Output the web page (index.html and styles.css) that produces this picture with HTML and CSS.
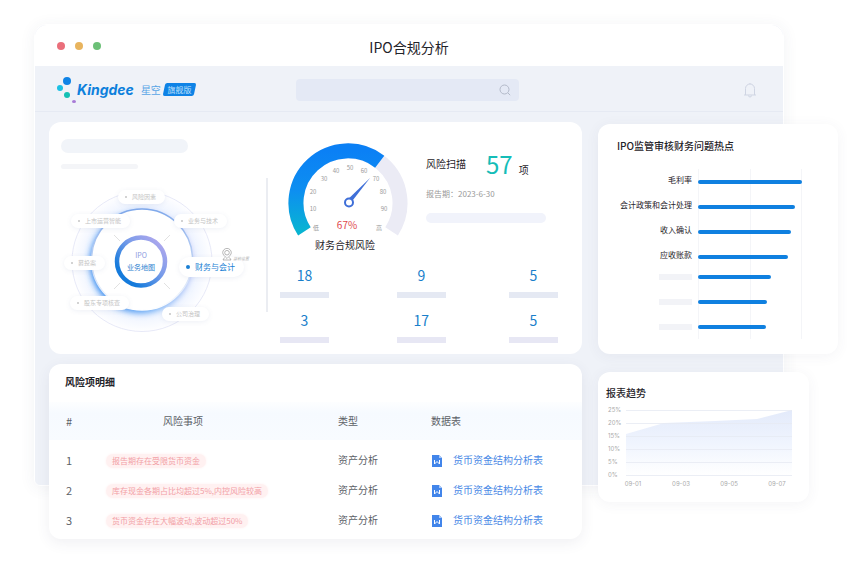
FILE: index.html
```html
<!DOCTYPE html>
<html lang="zh-CN">
<head>
    <meta charset="UTF-8">
    <meta name="viewport" content="width=device-width, initial-scale=1.0">
    <title>IPO合规分析</title>
    <link rel="stylesheet" href="styles.css">
</head>
<body>

<div class="scene">
    <div class="window">
        <header class="titlebar">
            <div class="lights">
                <span class="light red"></span>
                <span class="light yellow"></span>
                <span class="light green"></span>
            </div>
            <h1>IPO合规分析</h1>
        </header>
        <div class="toolbar">
            <div class="brand">
                <svg class="brand-dots" width="20" height="28" viewBox="0 0 20 28" aria-hidden="true">
                    <circle cx="10" cy="5" r="4" fill="#0f83e6"/>
                    <circle cx="3" cy="12" r="3" fill="#1cc0e4"/>
                    <circle cx="10" cy="19" r="3" fill="#14c0b4"/>
                    <ellipse cx="17" cy="25.500" rx="2" ry="1.500" fill="#a87ad6"/>
                </svg>
                <strong class="brand-name">Kingdee</strong>
                <span class="brand-sub">星空</span>
                <span class="brand-badge"><span>旗舰版</span></span>
            </div>
            <form class="search">
                <input type="text" aria-label="搜索">
                <button type="submit" aria-label="搜索">
                    <svg width="12" height="12" viewBox="0 0 12 12" fill="none" stroke="#b3bac9">
                        <circle cx="5.500" cy="5.500" r="4.500"/>
                        <path d="M9 9l2.200 2.200"/>
                    </svg>
                </button>
            </form>
            <button type="button" class="bell" aria-label="通知">
                <svg width="14" height="16" viewBox="0 0 14 16" fill="none" stroke="#cfd5e3">
                    <path d="M1 13h12M2.500 13V6.500a4.500 4.500 0 0 1 9 0V13M5.500 13.500a1.500 1.500 0 0 0 3 0M7 2V1"/>
                </svg>
            </button>
        </div>
    </div>

    <main class="board">
        <div class="column main-column">
            <section class="card overview">
                <div class="map-panel">
                    <div class="skeleton skeleton-title"></div>
                    <div class="skeleton skeleton-line"></div>
                    <div class="map">
                        <svg width="218" height="178" viewBox="0 0 218 178" aria-hidden="true">
                            <defs>
                                <linearGradient id="core" x1="0" y1="1" x2="1" y2="0">
                                    <stop offset="0.200" stop-color="#157bdc"/>
                                    <stop offset="0.600" stop-color="#7d9dea"/>
                                    <stop offset="1" stop-color="#bba9ee"/>
                                </linearGradient>
                                <linearGradient id="halo" x1="0" y1="0.700" x2="1" y2="0.300">
                                    <stop offset="0" stop-color="#1f7fee"/>
                                    <stop offset="0.500" stop-color="#6fadf5"/>
                                    <stop offset="1" stop-color="#b9b8f4"/>
                                </linearGradient>
                                <linearGradient id="rim" x1="0" y1="0" x2="0" y2="1">
                                    <stop offset="0" stop-color="#7fa8ea"/>
                                    <stop offset="1" stop-color="#ffffff"/>
                                </linearGradient>
                                <radialGradient id="wash">
                                    <stop offset="0.700" stop-color="#eaf1ff"/>
                                    <stop offset="1" stop-color="#fefeff"/>
                                </radialGradient>
                                <filter id="soft" x="-20%" y="-20%" width="140%" height="140%">
                                    <feGaussianBlur stdDeviation="3"/>
                                </filter>
                            </defs>
                            <circle cx="93" cy="85.500" r="70" fill="url(#wash)" stroke="#dde0f4" stroke-width="0.700"/>
                            <circle cx="92" cy="86" r="51" fill="url(#halo)" filter="url(#soft)"/>
                            <circle cx="93" cy="83.500" r="50.500" fill="#ffffff" stroke="url(#rim)" stroke-width="1.500"/>
                            <path d="M65 59l6 6M121 59l-6 6M65 113l6-6M121 113l-6-6" stroke="#d9d9d9" stroke-width="0.800"/>
                            <circle cx="92" cy="85.500" r="24" fill="#ffffff" stroke="url(#core)" stroke-width="4.500"/>
                        </svg>
                        <p class="map-core"><span>IPO</span>业务地图</p>
                        <span class="node node-risk">风险因素</span>
                        <span class="node node-listing">上市运营智能</span>
                        <span class="node node-tech">业务与技术</span>
                        <span class="node node-fund">募投案</span>
                        <span class="node node-holder">股东专项核查</span>
                        <span class="node node-govern">公司治理</span>
                        <span class="node node-finance">财务与会计</span>
                        <span class="pin">
                            <svg width="10" height="13" viewBox="0 0 10 13" fill="none" stroke="#9a9a9a" stroke-width="0.700">
                                <path d="M5 10.500C2.500 8 0.700 6.500 0.700 4.700a4.300 4.300 0 0 1 8.600 0C9.300 6.500 7.500 8 5 10.500z"/>
                                <circle cx="5" cy="4.700" r="2.300"/>
                                <path d="M2.500 9.500L1 12h8L7.500 9.500"/>
                            </svg>
                            <em>当前位置</em>
                        </span>
                    </div>
                </div>

                <div class="score-panel">
                    <div class="score-top">
                        <figure class="gauge">
                            <svg width="120" height="96" viewBox="0 0 120 96">
                                <defs>
                                    <linearGradient id="arc" x1="0" y1="0" x2="0" y2="1">
                                        <stop offset="0" stop-color="#0b80f5"/>
                                        <stop offset="0.500" stop-color="#0d8ff0"/>
                                        <stop offset="1" stop-color="#08b4d2"/>
                                    </linearGradient>
                                </defs>
                                <path d="M16.400 89.300A52 52 0 1 1 103.600 89.300" fill="none" stroke="#ebebf5" stroke-width="15"/>
                                <path d="M16.400 89.300A52 52 0 0 1 91.700 19.700" fill="none" stroke="url(#arc)" stroke-width="15"/>
                                <path d="M82 36L63.800 59.500L60.500 56.800z" fill="#3f6fd8"/>
                                <circle cx="61" cy="60.500" r="4" fill="#ffffff" stroke="#3f6fd8" stroke-width="2"/>
                                <g class="ticks">
                                    <text x="28" y="88">低</text>
                                    <text x="25" y="69">10</text>
                                    <text x="25" y="52">20</text>
                                    <text x="36" y="39">30</text>
                                    <text x="48" y="31">40</text>
                                    <text x="62" y="28">50</text>
                                    <text x="76" y="31">60</text>
                                    <text x="88" y="39">70</text>
                                    <text x="95" y="52">80</text>
                                    <text x="96" y="69">90</text>
                                    <text x="91" y="88">高</text>
                                </g>
                                <text class="gauge-value" x="59" y="87">67%</text>
                            </svg>
                            <figcaption>财务合规风险</figcaption>
                        </figure>
                        <div class="scan">
                            <p class="scan-count"><span class="scan-label">风险扫描</span><b>57</b><span>项</span></p>
                            <p class="scan-date">报告期：2023-6-30</p>
                            <div class="skeleton skeleton-scan"></div>
                        </div>
                    </div>
                    <ul class="stats">
                        <li>18</li>
                        <li>9</li>
                        <li>5</li>
                    </ul>
                    <ul class="stats lilac">
                        <li>3</li>
                        <li>17</li>
                        <li>5</li>
                    </ul>
                </div>
            </section>

            <section class="card details">
                <h2>风险项明细</h2>
                <table>
                    <thead>
                        <tr>
                            <th class="col-no">#</th>
                            <th class="col-item">风险事项</th>
                            <th class="col-type">类型</th>
                            <th>数据表</th>
                        </tr>
                    </thead>
                    <tbody>
                        <tr>
                            <td class="col-no">1</td>
                            <td><span class="tag">报告期存在受限货币资金</span></td>
                            <td>资产分析</td>
                            <td><a href="#"><svg width="12" height="14" viewBox="-1 -2 12 14"><path d="M0 0h7l3 3v9H0z" fill="#4285ea"/><path d="M7 0v3h3z" fill="#a9c8f8"/><path d="M2.500 5v4l2.500-2.500 2.500 2.500V5" fill="none" stroke="#ffffff"/></svg>货币资金结构分析表</a></td>
                        </tr>
                        <tr>
                            <td class="col-no">2</td>
                            <td><span class="tag">库存现金各期占比均超过5%,内控风险较高</span></td>
                            <td>资产分析</td>
                            <td><a href="#"><svg width="12" height="14" viewBox="-1 -2 12 14"><path d="M0 0h7l3 3v9H0z" fill="#4285ea"/><path d="M7 0v3h3z" fill="#a9c8f8"/><path d="M2.500 5v4l2.500-2.500 2.500 2.500V5" fill="none" stroke="#ffffff"/></svg>货币资金结构分析表</a></td>
                        </tr>
                        <tr>
                            <td class="col-no">3</td>
                            <td><span class="tag">货币资金存在大幅波动,波动超过50%</span></td>
                            <td>资产分析</td>
                            <td><a href="#"><svg width="12" height="14" viewBox="-1 -2 12 14"><path d="M0 0h7l3 3v9H0z" fill="#4285ea"/><path d="M7 0v3h3z" fill="#a9c8f8"/><path d="M2.500 5v4l2.500-2.500 2.500 2.500V5" fill="none" stroke="#ffffff"/></svg>货币资金结构分析表</a></td>
                        </tr>
                    </tbody>
                </table>
            </section>
        </div>

        <div class="column side-column">
            <section class="card hot">
                <h2>IPO监管审核财务问题热点</h2>
                <div class="bars">
                    <ul class="named">
                        <li><span class="label">毛利率</span><span class="track"><i style="width: 100%"></i></span></li>
                        <li><span class="label">会计政策和会计处理</span><span class="track"><i style="width: 93%"></i></span></li>
                        <li><span class="label">收入确认</span><span class="track"><i style="width: 89%"></i></span></li>
                        <li><span class="label">应收账款</span><span class="track"><i style="width: 87%"></i></span></li>
                    </ul>
                    <ul class="unnamed">
                        <li><span class="label"></span><span class="track"><i style="width: 70%"></i></span></li>
                        <li><span class="label"></span><span class="track"><i style="width: 66%"></i></span></li>
                        <li><span class="label"></span><span class="track"><i style="width: 65%"></i></span></li>
                    </ul>
                </div>
            </section>

            <section class="card trend">
                <h2>报表趋势</h2>
                <svg width="190" height="88" viewBox="0 0 190 88">
                    <defs>
                        <linearGradient id="area" x1="0" y1="0" x2="0" y2="1">
                            <stop offset="0" stop-color="#e3eafa"/>
                            <stop offset="0.500" stop-color="#eff4fe"/>
                            <stop offset="1" stop-color="#ffffff"/>
                        </linearGradient>
                    </defs>
                    <path d="M20 30L58 19L109 17L151 15L186 6V71H20z" fill="url(#area)"/>
                    <path d="M20 6.500H186M20 19.500H186M20 32.500H186M20 45.500H186M20 58.500H186M20 71.500H186" stroke="#e6eaf2" stroke-width="0.800"/>
                    <g class="axis">
                        <text x="2" y="8">25%</text>
                        <text x="2" y="21">20%</text>
                        <text x="2" y="34">15%</text>
                        <text x="2" y="47">10%</text>
                        <text x="2" y="60">5%</text>
                        <text x="2" y="73">0%</text>
                    </g>
                    <g class="axis dates">
                        <text x="27" y="82">09-01</text>
                        <text x="75" y="82">09-03</text>
                        <text x="123" y="82">09-05</text>
                        <text x="171" y="82">09-07</text>
                    </g>
                </svg>
            </section>
        </div>
    </main>
</div>

</body>
</html>
```

FILE: styles.css
```css
* {
    box-sizing: border-box;
}

body {
    margin: 0;
    background-color: #fff;
    color: #1f2329;
    font-family: "Noto Sans CJK SC", sans-serif;
    font-size: 10px;
    line-height: 16px;
}

h1, h2, p, ul, figure {
    margin: 0;
    padding: 0;
}

ul {
    list-style: none;
}

svg {
    display: block;
}

button {
    padding: 0;
    border: none;
    background: none;
    cursor: pointer;
}

h2 {
    font-size: 10px;
    font-weight: 500;
    line-height: 16px;
}

.scene {
    display: grid;
    padding: 24px 9px 34px 34px;
}

/* browser window behind the cards */
.window {
    grid-area: 1 / 1;
    margin: 0 54px 53px 0;
    border: 1px solid #fff;
    border-radius: 12px 12px 6px 6px;
    background-color: #eff2f8;
    box-shadow: 0 2px 16px rgba(60, 70, 100, 0.07);
}

.titlebar {
    display: grid;
    grid-template-columns: 1fr auto 1fr;
    align-items: center;
    height: 41px;
    border-radius: 12px 12px 0 0;
    background-color: #fff;
}

.titlebar h1 {
    padding-top: 2px;
    font-size: 14px;
    font-weight: 400;
    line-height: 20px;
}

.lights {
    display: flex;
    gap: 10px;
    padding-left: 22px;
}

.light {
    width: 8px;
    height: 8px;
    border-radius: 50%;
}

.red {
    background-color: #ea6f7b;
}

.yellow {
    background-color: #e8b45e;
}

.green {
    background-color: #6cc077;
}

.toolbar {
    display: grid;
    grid-template-columns: 1fr 223px 1fr;
    align-items: center;
    height: 46px;
    padding: 2px 26px 0 22px;
    border-bottom: 1px solid #e6eaf3;
}

.brand {
    display: flex;
    align-items: center;
}

.brand-name {
    color: #0d80dc;
    font-family: Inter, sans-serif;
    font-size: 14px;
    font-style: italic;
    font-weight: 700;
}

.brand-sub {
    margin: 0 3px 0 7px;
    color: #58a5e6;
}

.brand-badge {
    width: 31px;
    height: 13px;
    border-radius: 2px;
    background-color: #0f83e6;
    color: #bfe0fb;
    font-size: 8px;
    line-height: 13px;
    text-align: center;
    transform: skewX(-12deg);
}

.brand-badge span {
    display: block;
    transform: skewX(12deg);
}

.search {
    display: flex;
    align-items: center;
    height: 22px;
    padding-right: 8px;
    border-radius: 4px;
    background-color: #e4e9f5;
}

.search input {
    flex: 1;
    min-width: 0;
    border: none;
    background: none;
    outline: none;
}

.bell {
    justify-self: end;
}

.board {
    grid-area: 1 / 1;
    display: flex;
    align-items: flex-start;
    gap: 16px;
    padding: 98px 0 0 15px;
    z-index: 1;
}

.column {
    display: flex;
    flex-direction: column;
}

.main-column {
    flex: 1;
    min-width: 0;
    gap: 10px;
}

.side-column {
    width: 240px;
    gap: 18px;
    padding-top: 2px;
}

.card {
    border-radius: 12px;
    background-color: #fff;
    box-shadow: 0 2px 14px rgba(60, 70, 100, 0.06);
}

.skeleton {
    border-radius: 7px;
    background-color: #f1f4f9;
}

.overview {
    display: flex;
    height: 232px;
    box-shadow: none;
}

/* business map */
.map-panel {
    position: relative;
    width: 219px;
    padding-top: 17px;
}

.map-panel::after {
    content: "";
    position: absolute;
    top: 56px;
    right: 0;
    width: 2px;
    height: 134px;
    background-color: #ebedf2;
}

.skeleton-title {
    width: 127px;
    height: 14px;
    margin-left: 12px;
}

.skeleton-line {
    width: 77px;
    height: 5px;
    margin: 11px 0 7px 12px;
    background-color: #f4f5f8;
}

.map {
    position: relative;
}

.map-core {
    position: absolute;
    top: 73px;
    left: 72px;
    width: 40px;
    color: #2a80cf;
    font-size: 7px;
    line-height: 12px;
    text-align: center;
}

.map-core span {
    display: block;
    color: #8e9de0;
}

.node {
    position: absolute;
    display: flex;
    align-items: center;
    gap: 5px;
    height: 14px;
    padding: 0 9px 0 7px;
    border-radius: 7px;
    background-color: #fff;
    box-shadow: 0 1px 5px rgba(90, 110, 170, 0.1);
    color: #c4c4c4;
    font-size: 6px;
    white-space: nowrap;
}

.node::before {
    content: "";
    width: 2px;
    height: 2px;
    border-radius: 50%;
    background-color: currentColor;
}

.node-risk {
    top: 14px;
    left: 69px;
}

.node-listing {
    top: 38px;
    left: 22px;
}

.node-tech {
    top: 38px;
    left: 125px;
}

.node-fund {
    top: 80px;
    left: 15px;
}

.node-holder {
    top: 120px;
    left: 21px;
}

.node-govern {
    top: 131px;
    left: 113px;
}

.node-finance {
    top: 81px;
    left: 130px;
    height: 20px;
    border-radius: 10px;
    color: #1a7fd4;
    font-size: 8px;
}

.node-finance::before {
    width: 4px;
    height: 4px;
}

.pin {
    position: absolute;
    top: 72px;
    left: 173px;
    display: flex;
    align-items: flex-end;
    gap: 1px;
    color: #aaa;
    font-size: 4px;
    line-height: 6px;
}

/* score */
.score-panel {
    flex: 1;
    padding: 20px 24px 0 12px;
}

.score-top {
    display: flex;
    gap: 18px;
    padding-left: 8px;
}

.gauge figcaption {
    margin-top: -1px;
    padding-right: 6px;
    text-align: center;
}

.ticks {
    fill: #999;
    font-size: 6px;
    text-anchor: middle;
}

.gauge-value {
    fill: #e0484d;
    font-size: 10px;
    text-anchor: middle;
}

.scan-count {
    display: flex;
    align-items: baseline;
    padding-top: 6px;
    line-height: 32px;
}

.scan-label {
    align-self: flex-start;
}

.scan-count b {
    margin: 0 6px 0 20px;
    color: #15bdb8;
    font-size: 24px;
    font-weight: 400;
}

.scan-date {
    color: #999;
    font-size: 8px;
}

.skeleton-scan {
    width: 120px;
    height: 10px;
    margin-top: 11px;
    background-color: #f1f3fb;
}

.stats {
    display: grid;
    grid-template-columns: 51fr 49fr 49px;
    padding-top: 12px;
    color: #1a7fcb;
    font-size: 14px;
    line-height: 20px;
    text-align: center;
}

.stats li {
    width: 49px;
    border-bottom: 6px solid #e5e9f3;
    padding-bottom: 7px;
}

.stats.lilac li {
    border-color: #e7e7f4;
}

/* risk table */
.details {
    height: 175px;
    padding-top: 10px;
    box-shadow: 0 4px 14px rgba(60, 70, 100, 0.08);
}

.details h2 {
    padding-left: 16px;
    font-weight: 700;
}

.details table {
    width: 100%;
    margin-top: 12px;
    border-collapse: collapse;
    table-layout: fixed;
    color: #5c6167;
}

.details th {
    height: 38px;
    padding: 0;
    font-weight: 400;
    text-align: left;
}

.details thead tr {
    background: linear-gradient(#fdfeff, #f6faff 30%, #f8fbff);
}

.details td {
    height: 30px;
    padding: 0;
}

.details tbody::before {
    content: "";
    display: block;
    height: 5px;
}

.details .col-no {
    width: 57px;
    padding-left: 17px;
    font-size: 11px;
}

.details .col-item {
    width: 232px;
    padding-left: 57px;
}

.details .col-type {
    width: 93px;
}

.details a {
    display: flex;
    align-items: center;
    gap: 10px;
    color: #4a8ae6;
    text-decoration: none;
}

.tag {
    display: inline-block;
    padding: 0 6px;
    border-radius: 7px;
    background-color: #fff1f1;
    box-shadow: 0 0 3px #fff1f1;
    color: #f2a0a6;
    font-size: 8px;
    line-height: 14px;
}

/* hot issues */
.hot {
    height: 230px;
    padding: 14px 36px 0 19px;
}

.bars {
    margin-top: 15px;
}

.bars li {
    display: flex;
    align-items: center;
    gap: 6px;
    height: 25px;
}

.bars .label {
    width: 75px;
    font-size: 8px;
    line-height: 20px;
    text-align: right;
}

.bars .named .label {
    padding-bottom: 4px;
}

.bars .unnamed {
    margin-top: -5px;
}

.bars .unnamed .label {
    width: 33px;
    height: 6px;
    margin-left: 42px;
    background-color: #f2f3f7;
}

.track {
    display: flex;
    flex: 1;
    align-items: center;
    height: 25px;
    background-image: linear-gradient(#f4f5f8, #f4f5f8), linear-gradient(#f4f5f8, #f4f5f8), linear-gradient(#f4f5f8, #f4f5f8);
    background-position: 0 0, 50% 0, 100% 0;
    background-size: 1px 100%;
    background-repeat: no-repeat;
}

.track i {
    height: 4px;
    border-radius: 2px;
    background-color: #0f80e0;
}

/* trend */
.trend {
    width: 211px;
    height: 130px;
    padding: 13px 8px 0;
}

.trend svg {
    margin-top: 3px;
}

.axis {
    fill: #aaa;
    font-family: Inter, sans-serif;
    font-size: 6px;
}

.dates {
    text-anchor: middle;
}
```
